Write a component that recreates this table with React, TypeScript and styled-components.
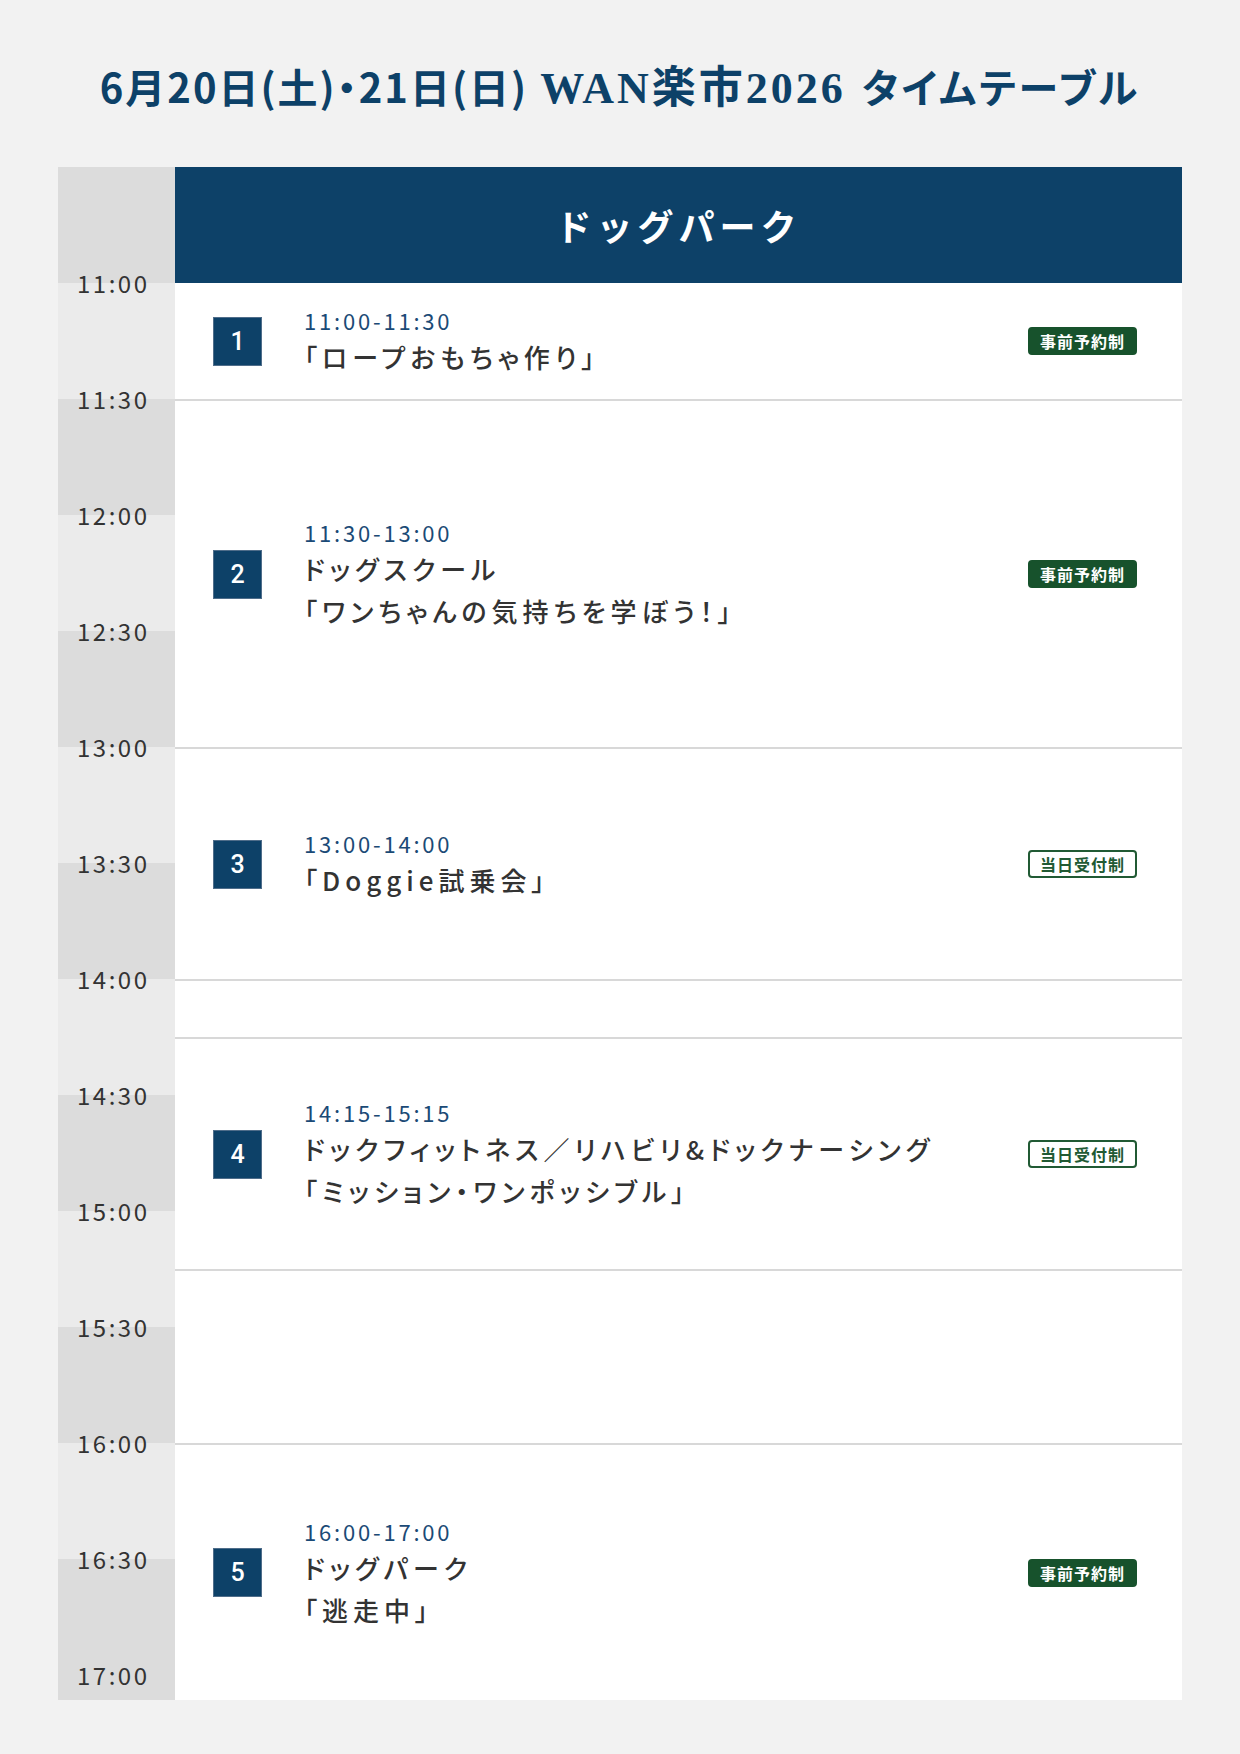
import React from "react";
import styled, { createGlobalStyle } from "styled-components";

const SLOT = 116;
const NAVY = "#0d4168";
const GREEN = "#17522c";
const SANS = `"Noto Sans CJK JP", "Noto Sans", "Liberation Sans", sans-serif`;

const GlobalStyle = createGlobalStyle`
  html, body { margin: 0; padding: 0; }
  body {
    background: #f2f2f2;
    font-family: ${SANS};
    color: #333;
  }
`;

const Page = styled.div`
  width: 1240px;
  min-height: 1754px;
  box-sizing: border-box;
  padding: 60px 58px 0;
  background: #f2f2f2;
`;

const Heading = styled.h1`
  margin: 0 0 55px;
  height: 52px;
  line-height: 52px;
  text-align: center;
  font-family: ${SANS};
  font-size: 40px;
  font-weight: 700;
  letter-spacing: 2px;
  font-feature-settings: "palt";
  color: ${NAVY};
  white-space: nowrap;
`;

const Serif = styled.span`
  font-family: "Liberation Serif", "Noto Sans CJK JP", serif;
  font-size: 44px;
  font-weight: 700;
  letter-spacing: 3px;
  margin: 0 16px 0 12px;
`;

const Katakana = styled.span`
  letter-spacing: 3px;
`;

const Table = styled.div`
  display: grid;
  grid-template-columns: 117px 1fr;
`;

const TimeColumn = styled.div`
  display: flex;
  flex-direction: column;
`;

const Band = styled.div<{ $dark: boolean; $h: number }>`
  position: relative;
  height: ${(p) => p.$h}px;
  background: ${(p) => (p.$dark ? "#dcdcdc" : "#ebebeb")};
`;

const TimeLabel = styled.span`
  position: absolute;
  left: 0;
  top: 0;
  transform: translateY(-50%);
  padding-left: 19px;
  font-size: 24px;
  line-height: 30px;
  letter-spacing: 2.5px;
  color: #333;
  z-index: 1;
`;

const Schedule = styled.div`
  display: flex;
  flex-direction: column;
  background: #fff;
`;

const StageHeader = styled.div`
  height: ${SLOT}px;
  flex: none;
  display: flex;
  align-items: center;
  justify-content: center;
  background: ${NAVY};
  color: #fff;
  font-size: 36px;
  font-weight: 700;
  letter-spacing: 5px;
`;

const Row = styled.div<{ $h?: number; $first?: boolean }>`
  box-sizing: border-box;
  ${(p) => (p.$h ? `height: ${p.$h}px; flex: none;` : "flex: 1;")}
  border-top: ${(p) => (p.$first ? "none" : "2px solid #d8d8d8")};
  display: flex;
  align-items: center;
  padding: 0 45px 0 38px;
`;

const NumBox = styled.div`
  width: 49px;
  height: 49px;
  flex: none;
  box-sizing: border-box;
  border: 1px solid #4f6d8a;
  background: ${NAVY};
  color: #fff;
  display: flex;
  align-items: center;
  justify-content: center;
  font-family: "Roboto", ${SANS};
  font-size: 25px;
  font-weight: 500;
  margin-right: 42px;
`;

const Info = styled.div`
  flex: 1;
  display: flex;
  flex-direction: column;
`;

const EventTime = styled.div`
  font-size: 22px;
  line-height: 32px;
  letter-spacing: 2.8px;
  color: #1b4a76;
`;

const EventLine = styled.div`
  font-size: 26px;
  font-weight: 500;
  line-height: 42px;
  letter-spacing: 5px;
  font-feature-settings: "palt";
  color: #333;
  white-space: nowrap;
`;

const Badge = styled.div<{ $solid: boolean }>`
  width: 109px;
  height: 28px;
  flex: none;
  box-sizing: border-box;
  border-radius: 4px;
  border: 2px solid ${(p) => (p.$solid ? GREEN : "#215a34")};
  background: ${(p) => (p.$solid ? GREEN : "#fff")};
  color: ${(p) => (p.$solid ? "#fff" : "#215a34")};
  display: flex;
  align-items: center;
  justify-content: center;
  font-size: 16px;
  font-weight: 700;
  letter-spacing: 1px;
`;

type Ev = {
  no: number;
  time: string;
  lines: string[];
  solid: boolean;
};

type RowData = { h?: number; ev?: Ev };

const rows: RowData[] = [
  { h: SLOT, ev: { no: 1, time: "11:00-11:30", lines: ["「ロープおもちゃ作り」"], solid: true } },
  {
    h: SLOT * 3,
    ev: { no: 2, time: "11:30-13:00", lines: ["ドッグスクール", "「ワンちゃんの気持ちを学ぼう！」"], solid: true },
  },
  { h: SLOT * 2, ev: { no: 3, time: "13:00-14:00", lines: ["「Doggie試乗会」"], solid: false } },
  { h: SLOT / 2 },
  {
    h: SLOT * 2,
    ev: {
      no: 4,
      time: "14:15-15:15",
      lines: ["ドックフィットネス／リハビリ&ドックナーシング", "「ミッション・ワンポッシブル」"],
      solid: false,
    },
  },
  { h: SLOT * 1.5 },
  { ev: { no: 5, time: "16:00-17:00", lines: ["ドッグパーク", "「逃走中」"], solid: true } },
];

const bands: { label?: string; dark: boolean; h: number }[] = [
  { dark: true, h: SLOT },
  ...["11", "12", "13", "14", "15", "16"].flatMap((hh) => [
    { label: `${hh}:00`, dark: false, h: SLOT },
    { label: `${hh}:30`, dark: true, h: SLOT },
  ]),
  { label: "17:00", dark: true, h: 25 },
];

export default function App() {
  return (
    <>
      <GlobalStyle />
      <Page>
        <Heading>
          6月20日(土)・21日(日)
          <Serif>WAN楽市2026</Serif>
          <Katakana>タイムテーブル</Katakana>
        </Heading>
        <Table>
          <TimeColumn>
            {bands.map((b, i) => (
              <Band key={i} $dark={b.dark} $h={b.h}>
                {b.label && <TimeLabel>{b.label}</TimeLabel>}
              </Band>
            ))}
          </TimeColumn>
          <Schedule>
            <StageHeader>ドッグパーク</StageHeader>
            {rows.map((r, i) => (
              <Row key={i} $h={r.h} $first={i === 0}>
                {r.ev && (
                  <>
                    <NumBox>{r.ev.no}</NumBox>
                    <Info>
                      <EventTime>{r.ev.time}</EventTime>
                      {r.ev.lines.map((l) => (
                        <EventLine key={l}>{l}</EventLine>
                      ))}
                    </Info>
                    <Badge $solid={r.ev.solid}>{r.ev.solid ? "事前予約制" : "当日受付制"}</Badge>
                  </>
                )}
              </Row>
            ))}
          </Schedule>
        </Table>
      </Page>
    </>
  );
}
